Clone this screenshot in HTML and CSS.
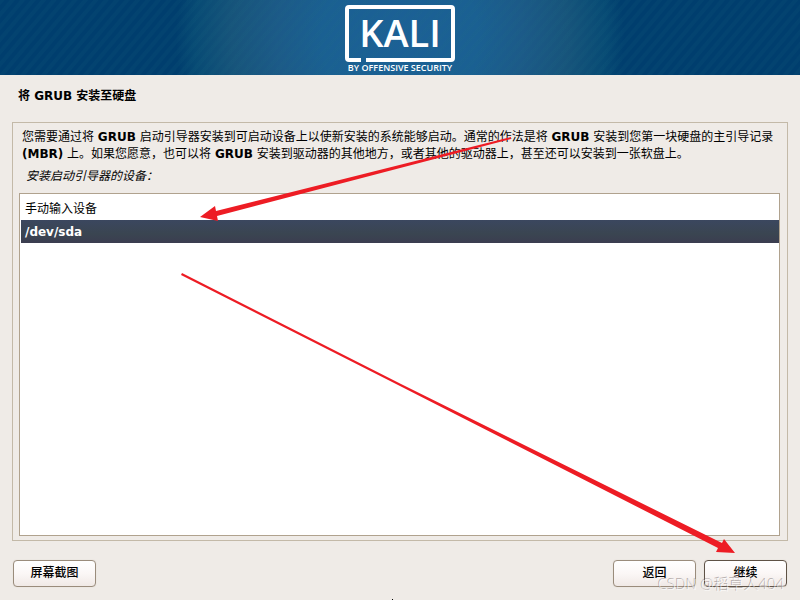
FILE: index.html
```
<!DOCTYPE html>
<html lang="zh-CN">
<head>
    <meta charset="UTF-8">
    <title>将 GRUB 安装至硬盘</title>
    <link rel="stylesheet" href="styles.css">
</head>
<body>
    <header class="banner">
        <svg class="logo" width="120" height="75" viewBox="0 0 120 75" role="img" aria-label="Kali by Offensive Security">
            <path d="M21 60 H9 Q7 60 7 58 V9 Q7 7 9 7 H111 Q113 7 113 9 V58 Q113 60 111 60 H26" />
            <text class="logo-name" x="60" y="47">KALI</text>
            <text class="logo-sub" x="60" y="71">BY OFFENSIVE SECURITY</text>
        </svg>
    </header>

    <h1>将 GRUB 安装至硬盘</h1>

    <form class="installer">
        <main class="panel">
            <p class="description">您需要通过将 <b>GRUB</b> 启动引导器安装到可启动设备上以使新安装的系统能够启动。通常的作法是将 <b>GRUB</b> 安装到您第一块硬盘的主引导记录 <b>(MBR)</b> 上。如果您愿意，也可以将 <b>GRUB</b> 安装到驱动器的其他地方，或者其他的驱动器上，甚至还可以安装到一张软盘上。</p>
            <p class="question" id="question">安装启动引导器的设备：</p>
            <div class="device-list" role="radiogroup" aria-labelledby="question">
                <label class="device">
                    <input type="radio" name="device" value="manual">
                    <span>手动输入设备</span>
                </label>
                <label class="device">
                    <input type="radio" name="device" value="/dev/sda" checked>
                    <span>/dev/sda</span>
                </label>
            </div>
        </main>

        <footer class="actions">
            <button type="button">屏幕截图</button>
            <button type="button" class="back">返回</button>
            <button type="button" class="default">继续</button>
        </footer>
    </form>

    <!-- Arrows drawn over the screen -->
    <svg class="arrows" width="800" height="600" viewBox="0 0 800 600" aria-hidden="true">
        <path d="M511 137 L511 139 L217 216 L218 221 L200 217 L215 206 L216 211 Z" />
        <path d="M182 273 L181 275 L400 386 L718 548 L716 552 L735 553 L724 539 L722 543 L401 384 Z" />
        <rect class="cursor" x="392" y="599" width="1" height="1" />
    </svg>
    <span class="watermark">CSDN @稻草人404</span>
</body>
</html>
```

FILE: styles.css
```
:root {
    --background-color: #efebe7;
    --border-color: #c3b9a8;
    --list-border: #b0a28e;
    --arrow-color: #ed1c24;
}
* {
    box-sizing: border-box;
}
body {
    position: relative;
    display: flex;
    flex-direction: column;
    min-height: 100vh;
    margin: 0;
    background-color: var(--background-color);
    color: #000;
    font-family: "DejaVu Sans", "Noto Sans CJK SC", sans-serif;
    font-size: 12px;
    line-height: 17px;
}
.banner {
    display: flex;
    justify-content: center;
    height: 75px;
    background:
        repeating-linear-gradient(130deg, rgba(30, 110, 130, 0.1) 0 3px, transparent 4px 7px, rgba(30, 110, 130, 0.1) 8px),
        radial-gradient(circle 224px at 50% 50%, #1c6096 0, #1a6092 35%, #1c5a88 55%, #17547b 75%, #074a74 92%, #003e6e 100%);
}
.logo path {
    fill: none;
    stroke: #fff;
    stroke-width: 4;
}
.logo text {
    fill: #fff;
    font-family: "Open Sans", sans-serif;
    text-anchor: middle;
}
.logo .logo-name {
    font-size: 38px;
    font-weight: 600;
}
.logo .logo-sub {
    font-size: 9px;
    font-weight: 600;
}
h1 {
    margin: 13px 18px 17px;
    font-size: 12px;
    font-weight: bold;
}
.installer {
    display: flex;
    flex: 1;
    flex-direction: column;
    padding: 0 12px 13px;
}
.panel {
    display: flex;
    flex: 1;
    flex-direction: column;
    padding: 6px 7px 4px 6px;
    border: 1px solid var(--border-color);
}
.description {
    margin: 0 3px;
}
.question {
    margin: 5px 7px 8px;
    font-style: italic;
}
.device-list {
    flex: 1;
    padding: 3px 0 3px 1px;
    background-color: #fff;
    border: 1px solid var(--list-border);
}
.device {
    display: block;
    height: 23px;
    padding: 4px;
}
.device input {
    position: absolute;
    opacity: 0;
    margin: 0;
}
.device:has(input:checked) {
    background: linear-gradient(#3b475f, #3a4551 60%, #3b3d50);
    color: #fff;
    font-weight: bold;
}
.actions {
    display: flex;
    gap: 8px;
    margin-top: 19px;
    padding: 0 1px;
}
button {
    width: 83px;
    height: 27px;
    padding: 0;
    background: linear-gradient(#fff, #fbf7f6 50%, #f0e9e6);
    border: 1px solid #9a8c7c;
    border-radius: 4px;
    box-shadow: 0 0 1px #cfc6bc;
    color: #000;
    font: inherit;
    font-weight: 500;
    cursor: pointer;
}
button.back {
    margin-left: auto;
}
button.default {
    border-color: #5e5246;
}
.arrows {
    position: absolute;
    top: 0;
    left: 0;
    fill: var(--arrow-color);
    pointer-events: none;
}
.arrows .cursor {
    fill: #000;
}
.watermark {
    position: absolute;
    right: 15px;
    bottom: 6px;
    color: rgba(255, 255, 255, 0.7);
    font-family: "Open Sans", "Noto Sans CJK SC", sans-serif;
    font-size: 15px;
    font-weight: 300;
    line-height: 20px;
    text-shadow: -1px -1px 0 rgba(110, 100, 100, 0.5);
    pointer-events: none;
}
```
